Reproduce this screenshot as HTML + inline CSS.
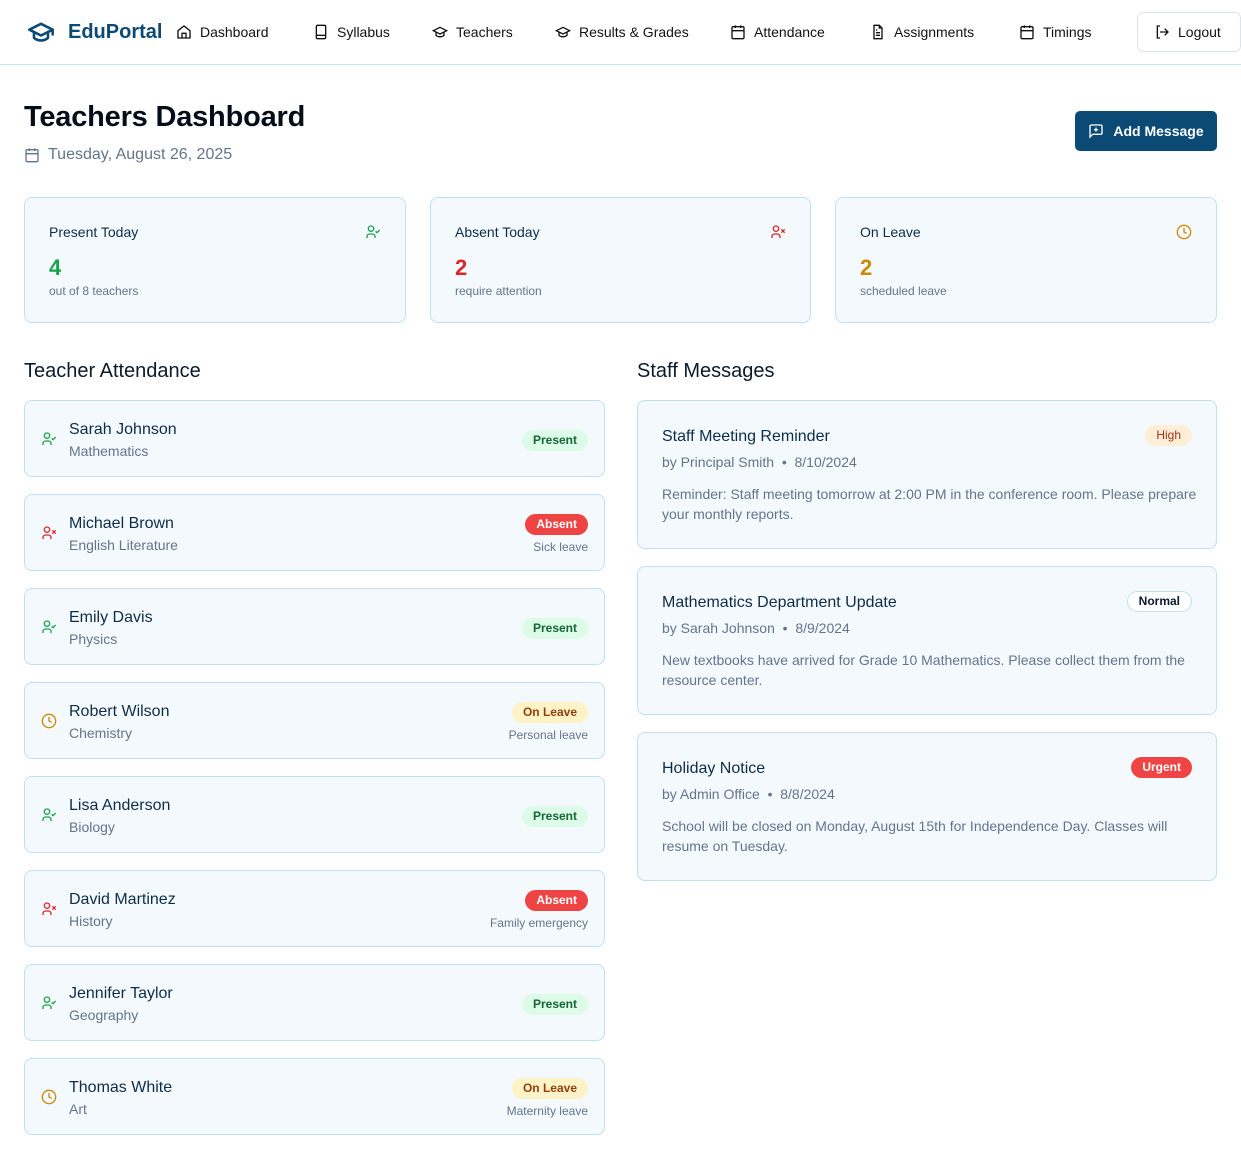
<!DOCTYPE html>
<html><head><meta charset="utf-8"><style>
*{box-sizing:border-box;margin:0;padding:0}
body{width:1241px;height:1167px;background:#fff;font-family:"Liberation Sans",sans-serif;color:#0c2d48;position:relative;overflow:hidden}
.a{position:absolute}
nav{position:absolute;left:0;top:0;width:1241px;height:65px;border-bottom:1px solid #bfe3f8}
.ni{position:absolute;top:24px;font-size:14px;color:#111;display:flex;align-items:center;gap:8px;white-space:nowrap}
.ni svg{width:16px;height:16px}
.card{position:absolute;background:#f4f9fe;border:1px solid #bde0f6;border-radius:8px}
.lbl{position:absolute;left:24px;top:26px;font-size:14px;color:#0c2d48}
.num{position:absolute;left:24px;top:57px;font-size:22px;font-weight:bold}
.sub{position:absolute;left:24px;top:86px;font-size:12px;color:#64748b}
.sic{position:absolute;right:24px;top:26px;width:16px;height:16px}
h2{position:absolute;font-size:20px;font-weight:500;color:#0b1b2b}
.row .ic{position:absolute;left:16px;top:30px;width:16px;height:16px}
.row .nm{position:absolute;left:44px;top:20px;font-size:16px;color:#0c2d48}
.row .sj{position:absolute;left:44px;top:42px;font-size:14px;color:#64748b}
.bd{position:absolute;right:16px;height:21px;line-height:21px;padding:0 11px;border-radius:11px;font-size:12px;font-weight:bold}
.pr{background:#dcfce7;color:#166534;top:29px}
.ab{background:#ef4444;color:#fff;top:19px}
.lv{background:#fef3c7;color:#92400e;top:19px}
.nt{position:absolute;right:16px;top:45px;font-size:12px;color:#64748b}
.msg .t{position:absolute;left:24px;top:27px;font-size:16px;color:#0c2d48}
.msg .m{position:absolute;left:24px;top:53px;font-size:14px;color:#64748b}
.msg .b{position:absolute;left:24px;top:83px;width:535px;font-size:14px;line-height:20px;color:#64748b}
.msg .bd{right:24px;top:24px}
</style></head><body>
<nav>
<div class="a" style="left:24px;top:18px;display:flex;align-items:center;gap:10px">
<svg width="34" height="28" viewBox="0 0 24 24" fill="none" stroke="#0b4a75" stroke-width="2.2" stroke-linecap="round" stroke-linejoin="round"><path d="M22 10 12 5 2 10l10 5 10-5z"/><path d="M6 12v5c3 3 9 3 12 0v-5"/><path d="M22 10v4"/></svg>
<span style="font-size:20px;font-weight:bold;color:#0b4a75">EduPortal</span></div>
<div class="ni" style="left:176px"><svg viewBox="0 0 24 24" fill="none" stroke="#111" stroke-width="2"><path d="M3 10l9-7 9 7v11H3z"/><path d="M9 21v-7h6v7"/></svg>Dashboard</div>
<div class="ni" style="left:313px"><svg viewBox="0 0 24 24" fill="none" stroke="#111" stroke-width="2"><rect x="5" y="2" width="14" height="20" rx="2"/><path d="M5 17h14"/></svg>Syllabus</div>
<div class="ni" style="left:432px"><svg viewBox="0 0 24 24" fill="none" stroke="#111" stroke-width="2"><path d="M22 10 12 5 2 10l10 5 10-5z"/><path d="M6 12v5c3 3 9 3 12 0v-5"/></svg>Teachers</div>
<div class="ni" style="left:555px"><svg viewBox="0 0 24 24" fill="none" stroke="#111" stroke-width="2"><path d="M22 10 12 5 2 10l10 5 10-5z"/><path d="M6 12v5c3 3 9 3 12 0v-5"/></svg>Results &amp; Grades</div>
<div class="ni" style="left:730px"><svg viewBox="0 0 24 24" fill="none" stroke="#111" stroke-width="2"><rect x="3" y="4" width="18" height="18" rx="2"/><path d="M16 2v4M8 2v4M3 10h18"/></svg>Attendance</div>
<div class="ni" style="left:870px"><svg viewBox="0 0 24 24" fill="none" stroke="#111" stroke-width="2"><path d="M14 2H6v20h12V6z"/><path d="M14 2v4h4M9 13h6M9 17h6M9 9h2"/></svg>Assignments</div>
<div class="ni" style="left:1019px"><svg viewBox="0 0 24 24" fill="none" stroke="#111" stroke-width="2"><rect x="3" y="4" width="18" height="18" rx="2"/><path d="M16 2v4M8 2v4M3 10h18"/></svg>Timings</div>
<div class="a" style="left:1137px;top:12px;width:104px;height:40px;border:1px solid #dde3ea;border-radius:6px"></div>
<div class="ni" style="left:1154px"><svg viewBox="0 0 24 24" fill="none" stroke="#111" stroke-width="2"><path d="M9 21H5V3h4"/><path d="M16 17l5-5-5-5M21 12H9"/></svg>Logout</div>
</nav>

<div class="a" style="left:24px;top:101px;font-size:29px;font-weight:bold;color:#050d1a;letter-spacing:-0.2px">Teachers Dashboard</div>
<div class="a" style="left:24px;top:146px;display:flex;align-items:center;gap:8px;font-size:16px;color:#64748b"><svg width="16" height="16" viewBox="0 0 24 24" fill="none" stroke="#64748b" stroke-width="2"><rect x="3" y="4" width="18" height="18" rx="2"/><path d="M16 2v4M8 2v4M3 10h18"/></svg>Tuesday, August 26, 2025</div>
<div class="a" style="left:1075px;top:111px;width:142px;height:40px;background:#0b4a75;border-radius:5px;color:#fff;font-size:14px;font-weight:bold;display:flex;align-items:center;justify-content:center;gap:9px"><svg width="16" height="16" viewBox="0 0 24 24" fill="none" stroke="#fff" stroke-width="2"><path d="M21 15a2 2 0 0 1-2 2H7l-4 4V5a2 2 0 0 1 2-2h14a2 2 0 0 1 2 2z"/><path d="M12 7v6M9 10h6"/></svg>Add Message</div>

<div class="card" style="left:24px;top:197px;width:382px;height:126px"><div class="lbl">Present Today</div><svg class="sic" viewBox="0 0 24 24" fill="none" stroke="#16a34a" stroke-width="2"><circle cx="9" cy="7" r="4"/><path d="M3 21v-2a4 4 0 0 1 4-4h4a4 4 0 0 1 4 4v2"/><path d="M16 11l2 2 4-4"/></svg><div class="num" style="color:#16a34a">4</div><div class="sub">out of 8 teachers</div></div>
<div class="card" style="left:430px;top:197px;width:381px;height:126px"><div class="lbl">Absent Today</div><svg class="sic" viewBox="0 0 24 24" fill="none" stroke="#dc2626" stroke-width="2"><circle cx="9" cy="7" r="4"/><path d="M3 21v-2a4 4 0 0 1 4-4h4a4 4 0 0 1 4 4v2"/><path d="M17 8l5 5M22 8l-5 5"/></svg><div class="num" style="color:#dc2626">2</div><div class="sub">require attention</div></div>
<div class="card" style="left:835px;top:197px;width:382px;height:126px"><div class="lbl">On Leave</div><svg class="sic" viewBox="0 0 24 24" fill="none" stroke="#ca8a04" stroke-width="2"><circle cx="12" cy="12" r="10"/><path d="M12 6v6l4 2"/></svg><div class="num" style="color:#ca8a04">2</div><div class="sub">scheduled leave</div></div>

<h2 style="left:24px;top:360px">Teacher Attendance</h2>
<h2 style="left:637px;top:360px">Staff Messages</h2>

<div id="rows"></div>
<script>
var P='<svg class="ic" viewBox="0 0 24 24" fill="none" stroke="#16a34a" stroke-width="2"><circle cx="9" cy="7" r="4"/><path d="M3 21v-2a4 4 0 0 1 4-4h4a4 4 0 0 1 4 4v2"/><path d="M16 11l2 2 4-4"/></svg>';
var A='<svg class="ic" viewBox="0 0 24 24" fill="none" stroke="#dc2626" stroke-width="2"><circle cx="9" cy="7" r="4"/><path d="M3 21v-2a4 4 0 0 1 4-4h4a4 4 0 0 1 4 4v2"/><path d="M17 8l5 5M22 8l-5 5"/></svg>';
var L='<svg class="ic" viewBox="0 0 24 24" fill="none" stroke="#ca8a04" stroke-width="2"><circle cx="12" cy="12" r="10"/><path d="M12 6v6l4 2"/></svg>';
var d=[["Sarah Johnson","Mathematics","p"],["Michael Brown","English Literature","a","Sick leave"],["Emily Davis","Physics","p"],["Robert Wilson","Chemistry","l","Personal leave"],["Lisa Anderson","Biology","p"],["David Martinez","History","a","Family emergency"],["Jennifer Taylor","Geography","p"],["Thomas White","Art","l","Maternity leave"]];
var h='';
d.forEach(function(r,i){var t=400+i*94;var ic=r[2]=='p'?P:r[2]=='a'?A:L;
var b=r[2]=='p'?'<div class="bd pr">Present</div>':r[2]=='a'?'<div class="bd ab">Absent</div>':'<div class="bd lv">On Leave</div>';
h+='<div class="card row" style="left:24px;top:'+t+'px;width:581px;height:77px">'+ic+'<div class="nm">'+r[0]+'</div><div class="sj">'+r[1]+'</div>'+b+(r[3]?'<div class="nt">'+r[3]+'</div>':'')+'</div>';});
var m=[["Staff Meeting Reminder","by Principal Smith &nbsp;•&nbsp; 8/10/2024","Reminder: Staff meeting tomorrow at 2:00 PM in the conference room. Please prepare your monthly reports.",'<div class="bd" style="background:#ffedd5;color:#9a3412;font-weight:500">High</div>'],
["Mathematics Department Update","by Sarah Johnson &nbsp;•&nbsp; 8/9/2024","New textbooks have arrived for Grade 10 Mathematics. Please collect them from the resource center.",'<div class="bd" style="background:#fff;border:1px solid #bde0f6;color:#0b1b2b;line-height:19px">Normal</div>'],
["Holiday Notice","by Admin Office &nbsp;•&nbsp; 8/8/2024","School will be closed on Monday, August 15th for Independence Day. Classes will resume on Tuesday.",'<div class="bd" style="background:#ef4444;color:#fff">Urgent</div>']];
m.forEach(function(r,i){var t=400+i*166;h+='<div class="card msg" style="left:637px;top:'+t+'px;width:580px;height:149px"><div class="t">'+r[0]+'</div><div class="m">'+r[1]+'</div><div class="b">'+r[2]+'</div>'+r[3]+'</div>';});
document.getElementById('rows').innerHTML=h;
</script>
</body></html>
